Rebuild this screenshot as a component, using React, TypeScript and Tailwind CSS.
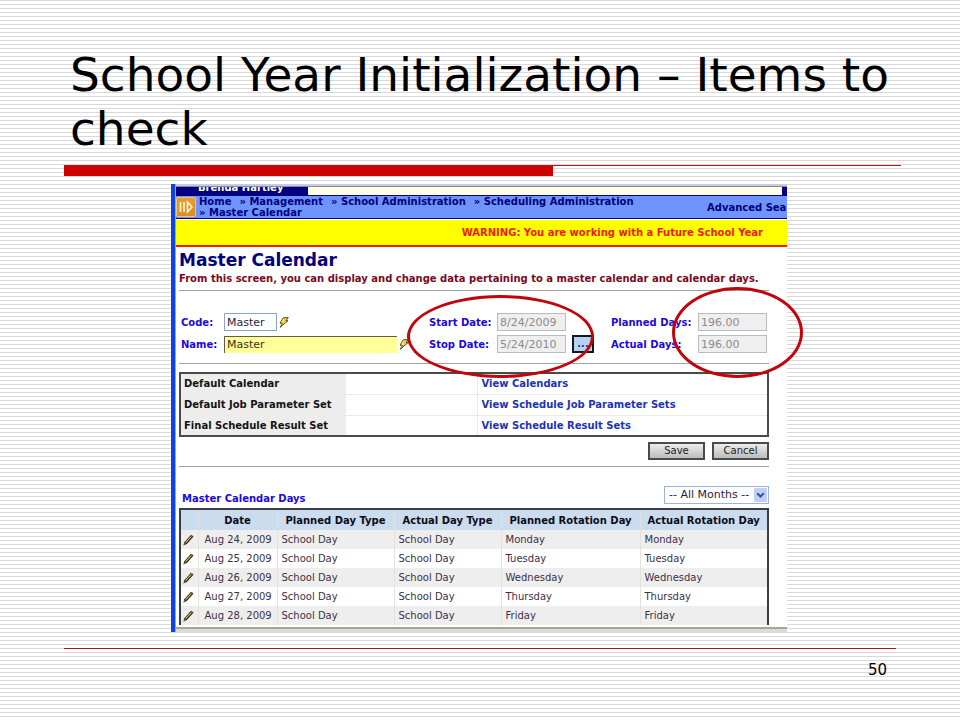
import type { ReactNode } from "react";

const crumbs = ["Home", "Management", "School Administration", "Scheduling Administration", "Master Calendar"];

const defaults = [
  { name: "Default Calendar", link: "View Calendars" },
  { name: "Default Job Parameter Set", link: "View Schedule Job Parameter Sets" },
  { name: "Final Schedule Result Set", link: "View Schedule Result Sets" },
];

const headings = ["Date", "Planned Day Type", "Actual Day Type", "Planned Rotation Day", "Actual Rotation Day"];

const days = [
  { date: "Aug 24, 2009", day: "Monday" },
  { date: "Aug 25, 2009", day: "Tuesday" },
  { date: "Aug 26, 2009", day: "Wednesday" },
  { date: "Aug 27, 2009", day: "Thursday" },
  { date: "Aug 28, 2009", day: "Friday" },
];

const Bolt = () => (
  <svg viewBox="0 0 10 11" className="h-[11px] w-[10px] shrink-0">
    <path d="M4.2 .8 9.3 .6 7 3.6 9 3.7 1.2 10.3 3.4 6.3 1 6.2Z" fill="#f2cf3a" stroke="#4d3f10" strokeWidth=".9" />
    <path d="M4.8 1.8 3 5.2 5 5.2" fill="none" stroke="#fff3a0" strokeWidth=".8" />
  </svg>
);

const Pencil = () => (
  <svg viewBox="0 0 11 12" className="h-3 w-[11px]">
    <path d="M.4 11.6 1.3 8.2 8 .8 10.6 2.6 3.8 10Z" fill="#2a2410" />
    <path d="M2.6 8.6 7.8 3.1" stroke="#c5c46a" strokeWidth="1.1" />
    <path d="M7.8 2.9 9.2 1.6" stroke="#c2532f" strokeWidth="1.8" />
    <path d="M1.4 10.4 2.1 9.2" stroke="#d9c9a0" strokeWidth=".7" />
  </svg>
);

const BarsArrow = () => (
  <svg viewBox="0 0 20 20" className="size-5 shrink-0">
    <rect x=".5" y=".5" width="19" height="19" rx="1.5" fill="#e59b2b" stroke="#f3c477" />
    <path d="M1 15 19 6V19H1Z" fill="#d98a1c" opacity=".6" />
    <path d="M4.5 5V15M8 5V15M11.5 5V15L16 10Z" fill="none" stroke="#fff3dc" strokeWidth="1.6" />
  </svg>
);

const Label = ({ id, children }: { id: string; children: ReactNode }) => (
  <label htmlFor={id} className="font-bold whitespace-nowrap text-[#1c08e0]">
    {children}
  </label>
);

const ReadOnly = ({ id, value }: { id: string; value: string }) => (
  <input
    id={id}
    disabled
    defaultValue={value}
    className="h-[18px] w-[69px] shrink-0 border border-[#b9bcbf] bg-[#efefef] px-0.5 text-[11px] text-[#8c8c8c]"
  />
);

const Rule = () => <hr className="border-t border-[#a3a3a3]" />;

const Circle = ({ className }: { className: string }) => (
  <div className={`pointer-events-none absolute rounded-[50%] border-[3px] border-[#c0060c] ${className}`} />
);

const CalendarScreen = () => (
  <div className="relative">
    <div className="overflow-hidden border-l-4 border-[#0d47d8] bg-white">
      <div className="border-l border-[#9aa7c4] text-[10px]">
        <div className="h-[3px] border-b border-[#8b8b8b] bg-[#c3cdeb]" />
        <div className="flex h-2 bg-[#000080]">
          <div className="flex w-[132px] items-end overflow-hidden pl-[22px] leading-3 font-bold text-white">
            <span className="mb-px whitespace-nowrap">Brenda Hartley</span>
          </div>
          <div className="mr-[5px] flex-1 bg-[#ffffe6]" />
        </div>

        <div className="flex h-6 items-center border-y border-[#000080] bg-[#6f94ff] font-bold text-[#00007c]">
          <BarsArrow />
          <nav className="ml-[3px] flex flex-1 flex-wrap gap-x-2 leading-[11px]">
            {crumbs.map((c, i) => (
              <a key={c} href="#" className="whitespace-nowrap">
                {i > 0 && "» "}
                {c}
              </a>
            ))}
          </nav>
          <a href="#" className="w-20 whitespace-nowrap">
            Advanced Sea
          </a>
        </div>
        <div className="mt-px h-[27px] border-b-2 border-[#e8200a] bg-[#ffff00] pr-6 text-right leading-[25px] font-bold text-[#f01a00]">
          WARNING: You are working with a Future School Year
        </div>

        <div className="mr-[18px] ml-[3px]">
          <h1 className="pt-[3px] text-[17px] leading-5 font-bold text-[#00007c]">Master Calendar</h1>
          <p className="pt-0.5 pb-1 leading-[14px] font-bold whitespace-nowrap text-[#780a20]">
            From this screen, you can display and change data pertaining to a master calendar and calendar days.
          </p>
          <Rule />

          <div className="grid grid-cols-[43px_205px_68px_1fr_87px_71px] items-center gap-y-1 pt-[22px] pb-2.5 pl-0.5">
            <Label id="code">Code:</Label>
            <div className="flex items-center gap-0.5">
              <input id="code" defaultValue="Master" className="h-[18px] w-[53px] border border-[#8ba6c4] px-0.5 text-[11px] text-[#2c1c40]" />
              <Bolt />
            </div>
            <Label id="start">Start Date:</Label>
            <ReadOnly id="start" value="8/24/2009" />
            <Label id="planned">Planned Days:</Label>
            <ReadOnly id="planned" value="196.00" />

            <Label id="name">Name:</Label>
            <div className="flex items-center gap-0.5">
              <input
                id="name"
                defaultValue="Master"
                className="h-[17px] w-[173px] border-t border-l border-[#5f5f50] bg-[#ffff98] px-0.5 text-[11px] text-[#3a3020]"
              />
              <Bolt />
            </div>
            <Label id="stop">Stop Date:</Label>
            <div className="flex items-center gap-1.5">
              <ReadOnly id="stop" value="5/24/2010" />
              <button className="h-[18px] w-[22px] border-2 border-[#101820] bg-[#b5d3f3] text-[10px] leading-3 font-bold text-[#243a70]">
                ...
              </button>
            </div>
            <Label id="actual">Actual Days:</Label>
            <ReadOnly id="actual" value="196.00" />
          </div>
          <Rule />

          <table className="mt-2 w-full table-fixed border-2 border-[#4a4a4a] font-bold">
            <tbody>
              {defaults.map((d) => (
                <tr key={d.name} className="h-[21px] border-b border-[#eceadf] last:border-b-0">
                  <th className="w-[166px] bg-[#ededed] pl-[3px] text-left whitespace-nowrap text-[#141414]">{d.name}</th>
                  <td className="w-[131px] border-r border-[#eceadf]" />
                  <td className="pl-1 text-[#1b33b8]">
                    <a href="#">{d.link}</a>
                  </td>
                </tr>
              ))}
            </tbody>
          </table>

          <div className="flex justify-end gap-[7px] pt-[5px] pb-1.5">
            <button className="h-[18px] w-[57px] border-2 border-[#4b4b4b] bg-linear-to-b from-[#ededed] to-[#bdbdbd] leading-3 text-[#222]">
              Save
            </button>
            <button className="h-[18px] w-[57px] border-2 border-[#4b4b4b] bg-linear-to-b from-[#ededed] to-[#bdbdbd] leading-3 text-[#222]">
              Cancel
            </button>
          </div>
          <Rule />

          <div className="flex items-end justify-between pt-[19px] pb-1 pl-[3px]">
            <h2 className="leading-[10px] font-bold text-[#1c08e0]">Master Calendar Days</h2>
            <div className="flex h-[18px] items-center border border-[#9db4d6] pr-px">
              <select aria-label="Month" className="h-4 w-[89px] appearance-none pl-1 text-[11px] text-[#2c1c40]">
                <option>-- All Months --</option>
              </select>
              <svg viewBox="0 0 13 14" className="h-3.5 w-[13px]">
                <rect width="13" height="14" rx="1.5" fill="#bed0fa" />
                <path d="M3.2 5.2 6.5 8.5 9.8 5.2" fill="none" stroke="#3c5590" strokeWidth="2" />
              </svg>
            </div>
          </div>

          <table className="w-full table-fixed border-2 border-b-0 border-[#3c3c44] text-[#3c3048]">
            <thead>
              <tr className="h-[21px] bg-[#cbdcee] text-[#0c0c18]">
                <th aria-label="Edit" className="w-[18px]" />
                {headings.map((h) => (
                  <th
                    key={h}
                    className="border-l border-[#dfe3e0] whitespace-nowrap nth-[2]:w-[79px] nth-[3]:w-[117px] nth-[4]:w-[107px] nth-[5]:w-[139px]"
                  >
                    {h}
                  </th>
                ))}
              </tr>
            </thead>
            <tbody>
              {days.map((d) => (
                <tr key={d.date} className="h-[19px] odd:bg-[#eeeeee] [&>td+td]:border-l [&>td+td]:border-[#e4e2da]">
                  <td className="pl-0.5">
                    <Pencil />
                  </td>
                  <td className="pl-1.5 whitespace-nowrap">{d.date}</td>
                  <td className="pl-1">School Day</td>
                  <td className="pl-1">School Day</td>
                  <td className="pl-1">{d.day}</td>
                  <td className="pl-1">{d.day}</td>
                </tr>
              ))}
            </tbody>
          </table>
        </div>
        <div className="mt-0.5 h-[5px] border-t-2 border-[#a5a598] bg-[#dcdcd2]" />
      </div>
    </div>
    <Circle className="top-[111px] left-[236px] h-[83px] w-[187px]" />
    <Circle className="top-[103px] left-[501px] h-[91px] w-[131px]" />
  </div>
);

export default function App() {
  return (
    <main className="min-h-screen bg-white bg-[repeating-linear-gradient(to_bottom,#d9d9d9_0px,#d9d9d9_1px,#ffffff_1px,#ffffff_4px)] font-['DejaVu_Sans',sans-serif]">
      <header className="mr-[59px] ml-16 pt-12">
        <h1 className="pb-[9px] pl-1.5 text-[47px] leading-[54px] text-black">School Year Initialization – Items to check</h1>
        <div className="h-px bg-[#a81820]" />
        <div className="h-2.5 w-[489px] bg-[#cc0000]" />
      </header>

      <section className="mt-2 mr-[173px] ml-[171px]">
        <CalendarScreen />
      </section>

      <footer className="mx-16 mt-4">
        <div className="h-px bg-[#a01818]" />
        <p className="pt-[9px] pr-[9px] text-right text-[15px] leading-6 text-black">50</p>
      </footer>
    </main>
  );
}
